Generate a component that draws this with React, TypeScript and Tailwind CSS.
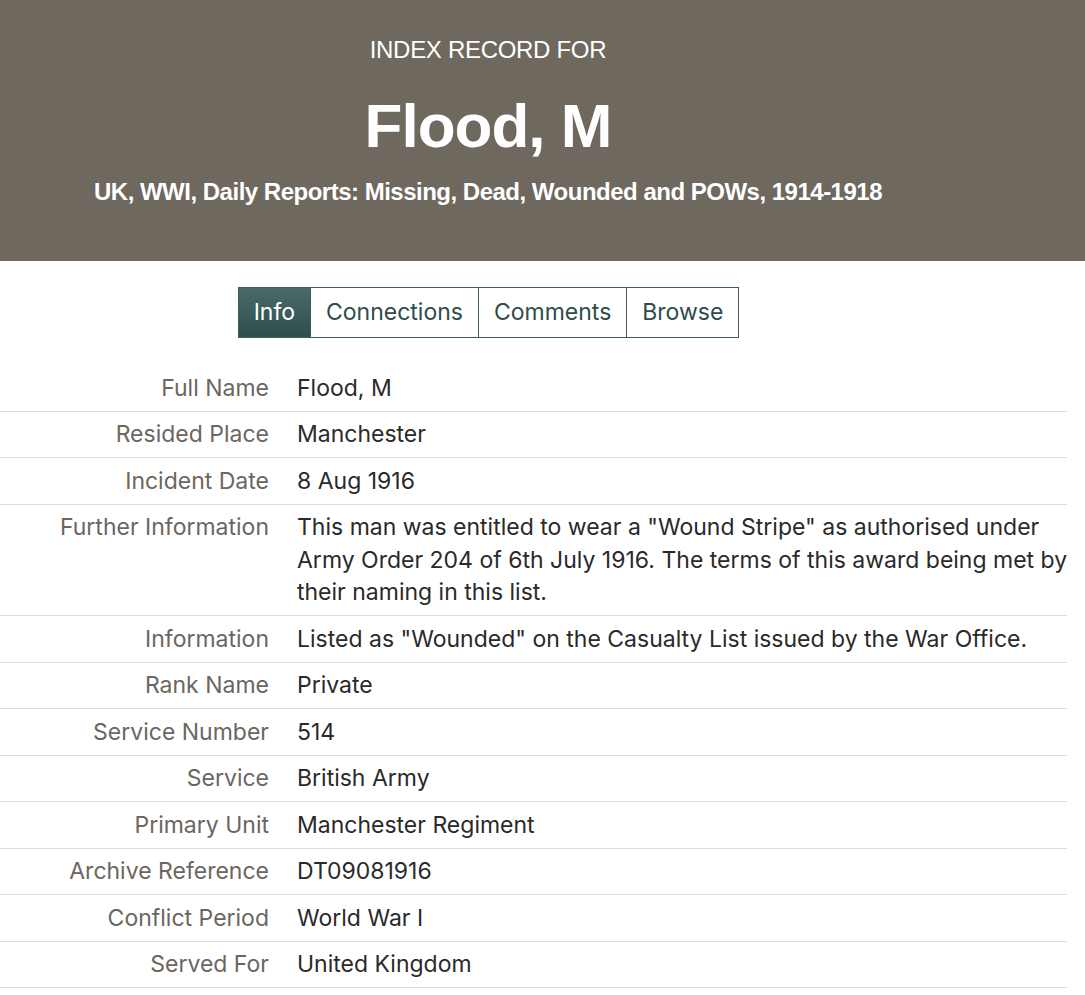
const rows: { label: string; value: string }[] = [
  { label: 'Full Name', value: 'Flood, M' },
  { label: 'Resided Place', value: 'Manchester' },
  { label: 'Incident Date', value: '8 Aug 1916' },
  {
    label: 'Further Information',
    value:
      'This man was entitled to wear a "Wound Stripe" as authorised under Army Order 204 of 6th July 1916. The terms of this award being met by their naming in this list.',
  },
  {
    label: 'Information',
    value: 'Listed as "Wounded" on the Casualty List issued by the War Office.',
  },
  { label: 'Rank Name', value: 'Private' },
  { label: 'Service Number', value: '514' },
  { label: 'Service', value: 'British Army' },
  { label: 'Primary Unit', value: 'Manchester Regiment' },
  { label: 'Archive Reference', value: 'DT09081916' },
  { label: 'Conflict Period', value: 'World War I' },
  { label: 'Served For', value: 'United Kingdom' },
];

const tabs = ['Info', 'Connections', 'Comments', 'Browse'];

export default function App() {
  return (
    <div className="min-h-screen bg-white font-['Inter',sans-serif]">
      <header className="h-[261px] bg-[#6e685e] font-['Liberation_Sans',Arial,sans-serif] text-white">
        <div className="flex w-[976px] flex-col items-center">
          <p className="mt-[36px] text-[24px] leading-[28px] tracking-[-0.3px]">INDEX RECORD FOR</p>
          <h1 className="mt-[26px] text-[62px] font-bold leading-[72px] tracking-[-1px]">Flood, M</h1>
          <p className="mt-[16px] text-[24px] font-bold leading-[28px] tracking-[-0.5px]">
            UK, WWI, Daily Reports: Missing, Dead, Wounded and POWs, 1914-1918
          </p>
        </div>
      </header>

      <nav className="flex w-[977px] justify-center pt-[26px]">
        <div className="flex border border-[#3f5c5b]">
          {tabs.map((t, i) => (
            <span
              key={t}
              className={
                i === 0
                  ? 'bg-gradient-to-b from-[#4a6b6a] to-[#2f4d4c] px-[15px] text-[23px] leading-[49px] text-white'
                  : 'border-l border-[#3f5c5b] px-[15px] text-[23px] leading-[49px] text-[#2e4c4b]'
              }
            >
              {t}
            </span>
          ))}
        </div>
      </nav>

      <dl className="mt-[27px] w-[1067px]">
        {rows.map((r) => (
          <div key={r.label} className="flex border-b border-[#dcdcdc] py-[6.5px] text-[23px] leading-[32.5px]">
            <dt className="w-[269px] shrink-0 text-right text-[#6b6660]">{r.label}</dt>
            {/* values may run a few px past the rule line, as in the source */}
            <dd className="ml-[28px] mr-[-14px] flex-1 text-[#2a2a2a]">{r.value}</dd>
          </div>
        ))}
      </dl>
    </div>
  );
}
